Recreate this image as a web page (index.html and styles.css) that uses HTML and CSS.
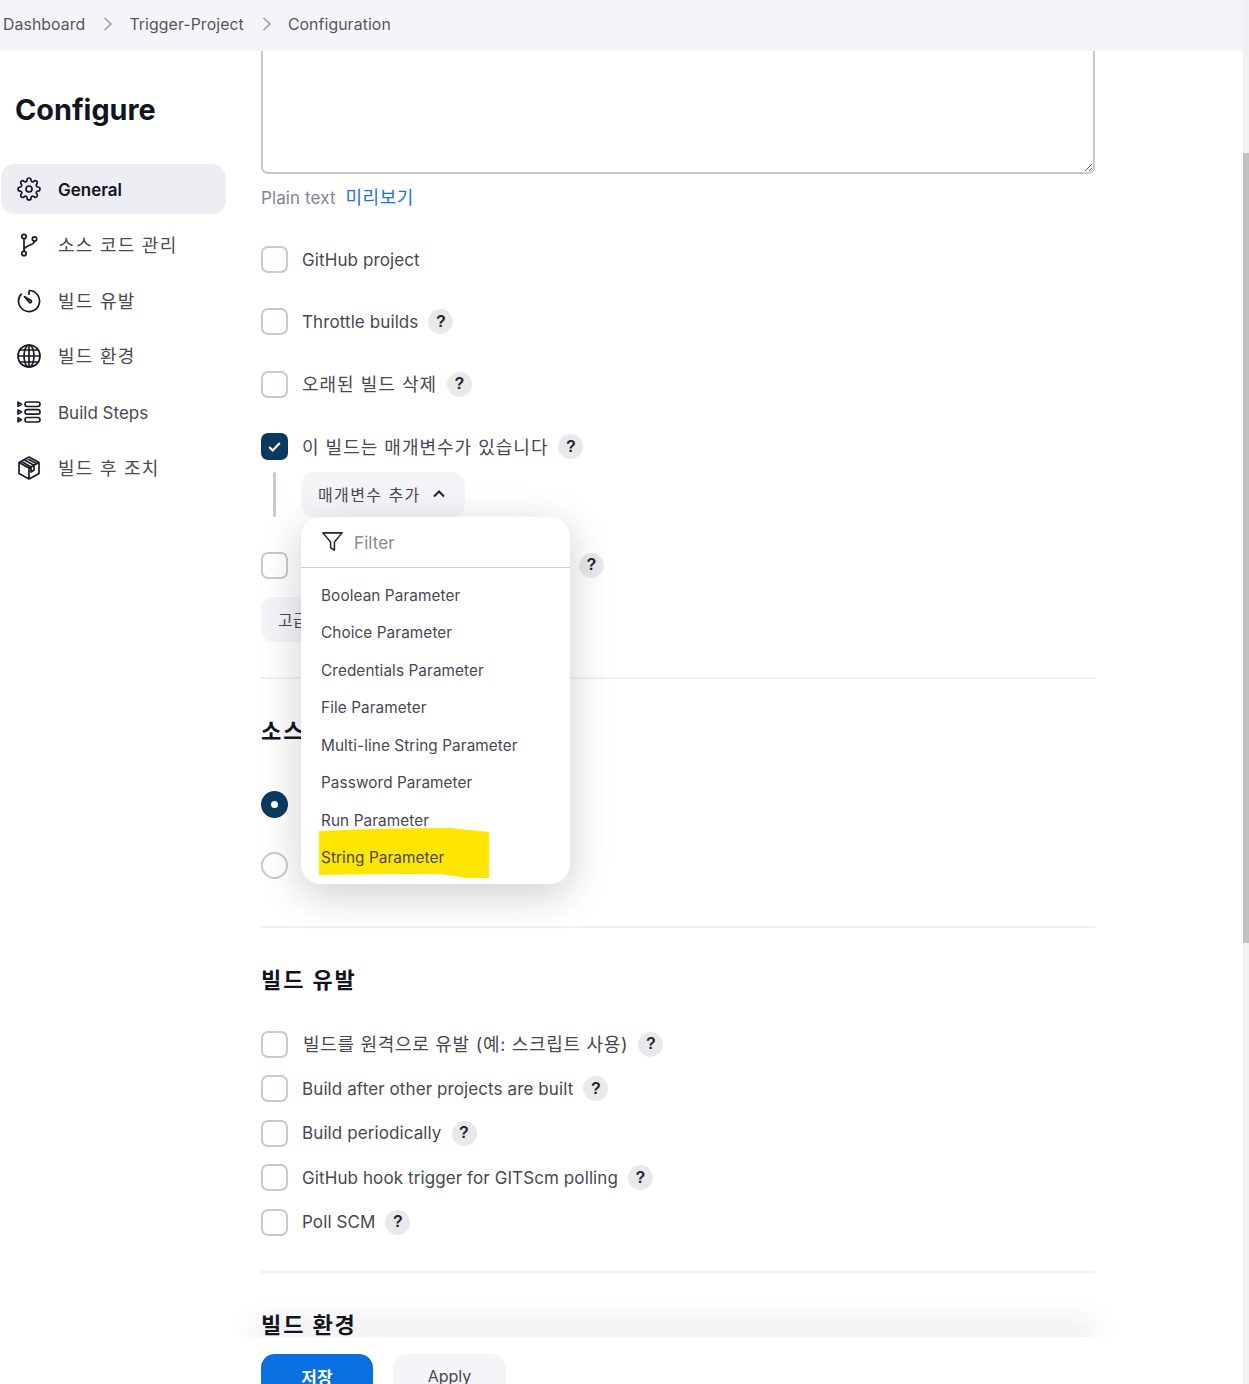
FILE: index.html
```html
<!DOCTYPE html>
<html lang="ko">
<head>
    <meta charset="UTF-8">
    <title>Configuration</title>
    <link rel="stylesheet" href="styles.css">
</head>
<body>
    <header class="crumbs">
        <span>Dashboard</span>
        <svg class="crumb-sep" viewBox="0 0 12 16"><path d="M2.5 2l6.5 6-6.5 6"/></svg>
        <span>Trigger-Project</span>
        <svg class="crumb-sep" viewBox="0 0 12 16"><path d="M2.5 2l6.5 6-6.5 6"/></svg>
        <span>Configuration</span>
    </header>

    <div class="page">
        <aside class="side">
            <h1>Configure</h1>
            <nav class="side-nav">
                <a class="side-item active">
                    <svg viewBox="0 0 24 24"><circle cx="12" cy="12" r="3"/><path d="M19.4 15a1.65 1.65 0 0 0 .33 1.82l.06.06a2 2 0 0 1 0 2.83 2 2 0 0 1-2.83 0l-.06-.06a1.65 1.65 0 0 0-1.82-.33 1.65 1.65 0 0 0-1 1.51V21a2 2 0 0 1-2 2 2 2 0 0 1-2-2v-.09A1.65 1.65 0 0 0 9 19.4a1.65 1.65 0 0 0-1.82.33l-.06.06a2 2 0 0 1-2.83 0 2 2 0 0 1 0-2.83l.06-.06a1.65 1.65 0 0 0 .33-1.82 1.65 1.65 0 0 0-1.51-1H3a2 2 0 0 1-2-2 2 2 0 0 1 2-2h.09A1.65 1.65 0 0 0 4.6 9a1.65 1.65 0 0 0-.33-1.82l-.06-.06a2 2 0 0 1 0-2.83 2 2 0 0 1 2.83 0l.06.06a1.65 1.65 0 0 0 1.82.33H9a1.65 1.65 0 0 0 1-1.51V3a2 2 0 0 1 2-2 2 2 0 0 1 2 2v.09a1.65 1.65 0 0 0 1 1.51 1.65 1.65 0 0 0 1.82-.33l.06-.06a2 2 0 0 1 2.83 0 2 2 0 0 1 0 2.83l-.06.06a1.65 1.65 0 0 0-.33 1.82V9a1.65 1.65 0 0 0 1.51 1H21a2 2 0 0 1 2 2 2 2 0 0 1-2 2h-.09a1.65 1.65 0 0 0-1.51 1z"/></svg>
                    <span class="side-label">General</span>
                </a>
                <a class="side-item">
                    <svg viewBox="0 0 24 24"><circle cx="7" cy="3.5" r="2.2"/><circle cx="7" cy="20.5" r="2.2"/><circle cx="17.5" cy="6" r="2.2"/><path d="M7 5.7v12.6M17.5 8.2c0 4.6-10.5 3.6-10.5 9"/></svg>
                    <span class="ko">소스 코드 관리</span>
                </a>
                <a class="side-item">
                    <svg viewBox="0 0 24 24"><path d="M12 1.500A10.500 10.500 0 1 1 4.600 4.600"/><path d="M12 1.500v4.500M7.600 7.600l5 6a1.400 1.400 0 0 0 1.800-1.800z"/></svg>
                    <span class="ko">빌드 유발</span>
                </a>
                <a class="side-item">
                    <svg viewBox="0 0 24 24"><circle cx="12" cy="12" r="11"/><ellipse cx="12" cy="12" rx="5" ry="11"/><path d="M12 1v22M1 12h22M3 6h18M3 18h18"/></svg>
                    <span class="ko">빌드 환경</span>
                </a>
                <a class="side-item">
                    <svg viewBox="0 0 24 24"><rect x="8" y="2" width="15" height="4.500" rx="2.200"/><rect x="8" y="9.700" width="15" height="4.500" rx="2.200"/><rect x="8" y="17.500" width="15" height="4.500" rx="2.200"/><path d="M1 2.200l3.400 2-3.400 2zM1 10l3.400 2-3.400 2zM1 17.800l3.400 2-3.400 2z"/></svg>
                    <span class="side-label">Build Steps</span>
                </a>
                <a class="side-item">
                    <svg viewBox="0 0 24 24"><path d="M12 1l10 5.500v11L12 23 2 17.500v-11zM2 6.500L12 12l10-5.500M12 12v11M7 3.800l10 5.500v5l-3 1.700v-5L4.200 5.300M9.700 2.300l10 5.500"/></svg>
                    <span class="ko">빌드 후 조치</span>
                </a>
            </nav>
        </aside>

        <main class="main">
            <textarea class="desc"></textarea>
            <div class="desc-foot"><span class="plain">Plain text</span><a class="preview">미리보기</a></div>

            <div class="opts opts-wide">
                <label class="opt"><span class="box"></span>GitHub project</label>
                <label class="opt"><span class="box"></span>Throttle builds<span class="help">?</span></label>
                <label class="opt"><span class="box"></span><span class="ko">오래된 빌드 삭제</span><span class="help">?</span></label>
                <label class="opt"><span class="box checked"><svg viewBox="0 0 16 16"><path d="M3 8.500l3.300 3.300L13 4.800"/></svg></span><span class="ko">이 빌드는 매개변수가 있습니다</span><span class="help">?</span></label>
            </div>

            <div class="param-wrap">
                <button class="btn"><span class="ko">매개변수 추가</span><svg class="chev" viewBox="0 0 14 10"><path d="M2 7.500l5-5 5 5"/></svg></button>
                <div class="menu">
                    <div class="menu-filter">
                        <svg viewBox="0 0 24 24"><path d="M2 3h20l-8 9.500V21l-4-2.500v-6z"/></svg>
                        <span class="filter-text">Filter</span>
                    </div>
                    <ul class="menu-list">
                        <li>Boolean Parameter</li>
                        <li>Choice Parameter</li>
                        <li>Credentials Parameter</li>
                        <li>File Parameter</li>
                        <li>Multi-line String Parameter</li>
                        <li>Password Parameter</li>
                        <li>Run Parameter</li>
                        <li class="marked">
                            <svg class="marker" viewBox="0 0 170 50"><path d="M0 3Q60 0 131 0Q150 2 170 4V50H146Q130 46 110 46Q50 46 0 47z"/></svg>
                            <span>String Parameter</span>
                        </li>
                    </ul>
                </div>
            </div>

            <label class="opt opt-hidden"><span class="box"></span><span class="hidden-label">Execute concurrent builds</span><span class="help">?</span></label>
            <button class="btn btn-adv">고급</button>
            <hr class="rule rule-first">

            <h2 class="sec sec-scm">소스 코드 관리</h2>
            <label class="opt radio-a"><span class="box round on"></span>None</label>
            <label class="opt radio-b"><span class="box round"></span>Git</label>
            <hr class="rule rule-scm">

            <h2 class="sec sec-trig">빌드 유발</h2>
            <div class="opts opts-tight">
                <label class="opt"><span class="box"></span><span class="ko long">빌드를 원격으로 유발 (예: 스크립트 사용)</span><span class="help">?</span></label>
                <label class="opt"><span class="box"></span>Build after other projects are built<span class="help">?</span></label>
                <label class="opt"><span class="box"></span>Build periodically<span class="help">?</span></label>
                <label class="opt"><span class="box"></span>GitHub hook trigger for GITScm polling<span class="help">?</span></label>
                <label class="opt"><span class="box"></span>Poll SCM<span class="help">?</span></label>
            </div>
            <hr class="rule rule-trig">

            <h2 class="sec sec-env">빌드 환경</h2>
        </main>
    </div>

    <footer class="savebar">
        <button class="btn-save">저장</button>
        <button class="btn-apply">Apply</button>
    </footer>

    <div class="scroll"><div class="scroll-thumb"></div></div>
</body>
</html>
```

FILE: styles.css
```css
:root {
    --ink: #14141f;
    --text: #484852;
    --border: #c3ccd1;
    --soft: #f5f5f9;
    --navy: #0b3a5e;
}

* {
    margin: 0;
    padding: 0;
    box-sizing: border-box;
}

html, body {
    height: 1384px;
    overflow: hidden;
}

body {
    position: relative;
    background: white;
    color: var(--text);
    font-family: Inter, "Noto Sans CJK KR", sans-serif;
    font-size: 17px;
    letter-spacing: 0.1px;
}

/* Korean runs set wider than the Latin text around them */
.ko {
    font-size: 18px;
    letter-spacing: 1px;
    position: relative;
    top: -1px;
}

.ko.long {
    letter-spacing: 0.7px;
    margin-left: 1px;
}

.crumbs {
    height: 51px;
    background: var(--soft);
    display: flex;
    align-items: center;
    padding: 0 0 3px 3px;
    font-size: 15.800px;
    color: #55555f;
}

.crumb-sep {
    width: 12px;
    height: 16px;
    margin: 0 15px 0 17px;
    fill: none;
    stroke: #9a9aa8;
    stroke-width: 1.5;
}

.page {
    display: flex;
}

.side {
    width: 261px;
    flex: none;
    padding-left: 1px;
}

.side h1 {
    font-size: 28.800px;
    font-weight: 700;
    letter-spacing: 0;
    color: var(--ink);
    line-height: 36px;
    margin: 41px 0 36px 14px;
}

.side-nav {
    display: flex;
    flex-direction: column;
    gap: 5.750px;
    width: 225px;
}

.side-item {
    height: 50px;
    display: flex;
    align-items: center;
    gap: 17px;
    padding-left: 16px;
    border-radius: 14px;
    font-size: 17px;
    letter-spacing: 0;
    color: #4a4a55;
}

.side-item .ko {
    letter-spacing: 1.250px;
}

.side-label {
    position: relative;
    top: 1px;
}

.side-item svg {
    width: 24px;
    height: 24px;
    flex: none;
    fill: none;
    stroke: #1a1a26;
    stroke-width: 1.7;
    stroke-linejoin: round;
}

.side-item.active {
    background: #eceef4;
    color: var(--ink);
    font-weight: 600;
}

.main {
    width: 834px;
    flex: none;
}

.desc {
    display: block;
    width: 100%;
    height: 123px;
    border: 2px solid var(--border);
    border-top: 0;
    border-radius: 0 0 7px 7px;
    outline: none;
    resize: vertical;
}

.desc-foot {
    display: flex;
    align-items: baseline;
    gap: 10px;
    margin-top: 11px;
    line-height: 26px;
}

.plain {
    color: #83839a;
}

.preview {
    color: #1a73e8;
    font-size: 18px;
    letter-spacing: 0.5px;
}

.opts {
    display: flex;
    flex-direction: column;
}

.opts-wide {
    gap: 35.400px;
    margin-top: 35px;
}

.opts-tight {
    gap: 17.500px;
    margin-top: 36px;
}

.opt {
    display: flex;
    align-items: center;
    height: 27px;
    white-space: nowrap;
}

.box {
    width: 27px;
    height: 27px;
    flex: none;
    margin-right: 14px;
    border: 2px solid var(--border);
    border-radius: 7px;
    background: white;
    display: flex;
    align-items: center;
    justify-content: center;
}

.box.checked {
    background: var(--navy);
    border-color: var(--navy);
}

.box.checked svg {
    width: 17px;
    height: 17px;
    fill: none;
    stroke: white;
    stroke-width: 2;
}

.box.round {
    border-radius: 50%;
}

.box.on {
    background: var(--navy);
    border-color: var(--navy);
}

.box.on::after {
    content: "";
    width: 7px;
    height: 7px;
    border-radius: 50%;
    background: white;
}

.help {
    width: 25px;
    height: 25px;
    margin-left: 10px;
    border-radius: 50%;
    background: #e9e9ec;
    color: #22222c;
    font-family: "Liberation Sans", sans-serif;
    font-size: 16px;
    font-weight: 700;
    display: flex;
    align-items: center;
    justify-content: center;
}

.param-wrap {
    position: relative;
    margin-top: 11.800px;
    padding-left: 40px;
    height: 45px;
}

.param-wrap::before {
    content: "";
    position: absolute;
    left: 12px;
    top: 0;
    width: 3px;
    height: 45px;
    border-radius: 2px;
    background: var(--border);
}

.btn {
    height: 45px;
    padding: 0 19px 0 17px;
    border: none;
    border-radius: 13px;
    background: var(--soft);
    color: var(--text);
    font: inherit;
    font-size: 16px;
    display: inline-flex;
    align-items: center;
}

.btn .ko {
    font-size: 16px;
    letter-spacing: 1.400px;
    top: 0;
}

.chev {
    width: 14px;
    height: 10px;
    margin-left: 11px;
    fill: none;
    stroke: #22222c;
    stroke-width: 2;
}

.menu {
    position: absolute;
    left: 40px;
    top: 45px;
    width: 269px;
    height: 367px;
    z-index: 5;
    background: white;
    border-radius: 20px;
    box-shadow: 0 10px 40px rgba(30, 30, 50, 0.22);
    font-size: 15.300px;
}

.menu-filter {
    height: 51px;
    display: flex;
    align-items: center;
    gap: 10px;
    padding-left: 20px;
    border-bottom: 1px solid #c9cccf;
    color: #8a8a93;
    font-size: 17px;
}

.filter-text {
    position: relative;
    top: 1px;
}

.menu-filter svg {
    width: 23px;
    height: 23px;
    fill: none;
    stroke: #26262f;
    stroke-width: 1.6;
    stroke-linejoin: round;
}

.menu-list {
    list-style: none;
    padding-top: 9px;
}

.menu-list li {
    height: 37.500px;
    line-height: 37.500px;
    padding-left: 20px;
    position: relative;
}

.marked span {
    position: relative;
}

.marker {
    position: absolute;
    left: 18px;
    top: -11px;
    width: 170px;
    height: 50px;
    fill: #ffe600;
}

.opt-hidden {
    margin-top: 35px;
}

.hidden-label {
    width: 266px;
}

.opt-hidden .help {
    margin-left: 11px;
}

.btn-adv {
    display: flex;
    margin-top: 18px;
    width: 80px;
}

.rule {
    border: none;
    border-top: 2px solid #f0f0f3;
}

.rule-first {
    margin-top: 35px;
}

.sec {
    font-size: 22px;
    font-weight: 700;
    letter-spacing: 1.900px;
    color: var(--ink);
    line-height: 30px;
}

.sec-scm {
    margin-top: 37px;
}

.radio-a {
    margin-top: 45px;
}

.radio-b {
    margin-top: 34px;
}

.rule-scm {
    margin-top: 47px;
}

.sec-trig {
    margin-top: 37px;
}

.rule-trig {
    margin-top: 35px;
}

.sec-env {
    margin-top: 37px;
}

.savebar {
    position: absolute;
    left: 0;
    right: 0;
    top: 1337px;
    height: 47px;
    background: white;
    display: flex;
    gap: 20px;
    padding: 17px 0 0 261px;
}

.savebar::before {
    content: "";
    position: absolute;
    left: 260px;
    width: 830px;
    top: 0;
    height: 1px;
    box-shadow: 0 -4px 30px 6px rgba(40, 40, 60, 0.16);
    z-index: -1;
}

.btn-save,
.btn-apply {
    height: 50px;
    border: none;
    border-radius: 14px;
    font: inherit;
    font-size: 16px;
    padding-bottom: 6px;
}

.btn-save {
    width: 112px;
    background: #0a6fe0;
    color: white;
    font-weight: 700;
    font-size: 17px;
}

.btn-apply {
    width: 113px;
    background: var(--soft);
    color: var(--text);
}

.scroll {
    position: absolute;
    top: 0;
    right: 0;
    bottom: 0;
    width: 6px;
    background: #f1f1f1;
    padding-top: 153px;
    z-index: 6;
}

.scroll-thumb {
    height: 790px;
    background: #c1c1c1;
}
```
